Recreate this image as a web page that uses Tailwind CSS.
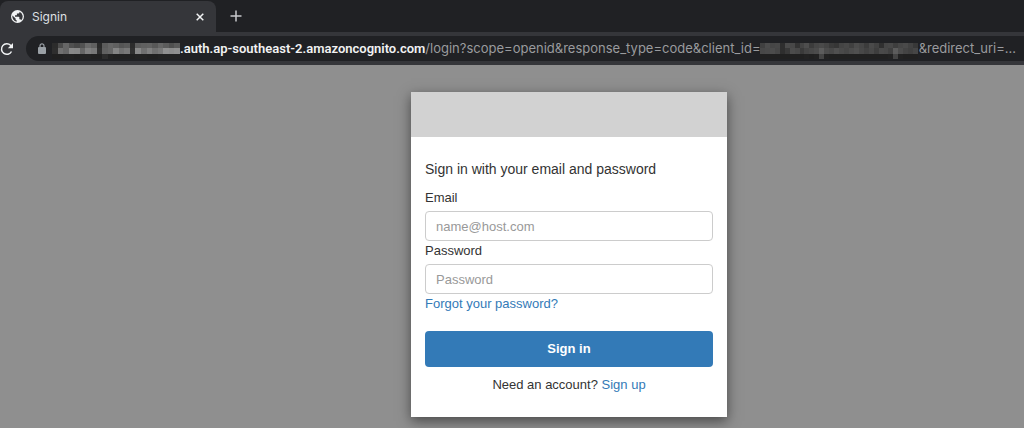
<!DOCTYPE html>
<html lang="en">
<head>
    <meta charset="UTF-8">
    <meta name="viewport" content="width=device-width, initial-scale=1.0">
    <title>Signin</title>
    <script src="https://cdn.jsdelivr.net/npm/@tailwindcss/browser@4"></script>
</head>
<body class="flex min-h-screen flex-col bg-[#8f8f8f] font-['Liberation_Sans',sans-serif] text-[#333333]">
    <!-- Browser window -->
    <header class="bg-[#202124] font-[Inter,sans-serif] text-white">
        <div class="flex h-8 items-end">
            <div class="flex h-[31px] w-[216px] items-center rounded-t-lg bg-[#35363a] pl-[11px] pr-2 text-xs text-[#dfe0e3]">
                <svg class="size-[13px] shrink-0" viewBox="0 0 24 24">
                    <circle cx="12" cy="12" r="12" fill="#f1f3f4"/>
                    <path d="M10.500 21.500A9.600 9.600 0 0 1 2.700 10l5.800 5.700v1.200a2 2 0 0 0 2 2zM18.900 18.700a2.400 2.400 0 0 0-2.300-1.700h-1.200v-3.500a1.200 1.200 0 0 0-1.200-1.200H7.400V9.900h2.300a1.200 1.200 0 0 0 1.200-1.200V6.400h2.400a2.400 2.400 0 0 0 2.400-2.400v-.7a9.600 9.600 0 0 1 3.200 15.400z" fill="#35363a"/>
                </svg>
                <span class="ml-2 flex-1">Signin</span>
                <button class="flex size-4 items-center justify-center" aria-label="Close tab">
                    <svg class="size-2" viewBox="0 0 8 8" stroke="#f1f3f4" stroke-width="1.5"><path d="M.7.7l6.600 6.600M7.300.7L.7 7.300"/></svg>
                </button>
            </div>
            <button class="ml-3 flex h-8 w-4 items-center justify-center" aria-label="New tab">
                <svg class="size-3" viewBox="0 0 12 12" stroke="#c8c9cc" stroke-width="1.5"><path d="M6 .5v11M.5 6h11"/></svg>
            </button>
        </div>
        <div class="flex h-[33px] items-center bg-[#35363a]">
            <button class="w-[26px] shrink-0" aria-label="Reload">
                <svg class="size-[14px]" viewBox="0 0 14 14" fill="none"><path d="M11.500 9.500A5.300 5.300 0 1 1 10.600 3.300L12 5" stroke="#f1f3f4" stroke-width="1.5"/><path d="M13 1v5.200H7.800z" fill="#f1f3f4"/></svg>
            </button>
            <div class="flex h-[25px] min-w-0 flex-1 items-center overflow-hidden rounded-l-full bg-[#202124] pr-2 pl-3 text-[13px] whitespace-nowrap text-[#9a9b9e]">
                <svg class="h-[11px] w-2 shrink-0" viewBox="0 0 8 11"><rect y="4" width="8" height="7" rx="1" fill="#9aa0a6"/><path d="M2 4.500V2.800a2 2 0 0 1 4 0v1.700" fill="none" stroke="#9aa0a6" stroke-width="1.2"/></svg>
                <svg id="host-mask" class="mt-1 ml-[6px] h-4 w-[128px] shrink-0" viewBox="0 0 23 3" preserveAspectRatio="none" shape-rendering="crispEdges"></svg>
                <span class="font-[Roboto,sans-serif] font-semibold text-[#f1f1f2]">.auth.ap-southeast-2.amazoncognito.com</span>
                <span>/login?scope=openid&amp;response_type=code&amp;client_id=</span>
                <svg id="client-mask" class="mt-1 h-4 min-w-0 flex-1" viewBox="0 0 32 3" preserveAspectRatio="none" shape-rendering="crispEdges"></svg>
                <span>&amp;redirect_uri=...</span>
            </div>
        </div>
    </header>

    <!-- Sign in card -->
    <main class="flex-1 pt-[27px] pl-[114px]">
        <form class="mx-auto max-w-[316px] bg-white shadow-[0_4px_12px_rgba(0,0,0,0.5)]">
            <div class="h-[45px] bg-[#d2d2d2]"></div>
            <div class="px-[14px] pt-[22px] pb-[22px] text-[13px] leading-5">
                <h1 class="text-sm leading-5">Sign in with your email and password</h1>
                <label class="mt-[9px] block" for="email">Email</label>
                <input class="mt-[3px] block h-[30px] w-full rounded border border-[#cccccc] px-[10px] placeholder:text-[#999999]" id="email" type="email" placeholder="name@host.com">
                <label class="block" for="password">Password</label>
                <input class="mt-[3px] block h-[30px] w-full rounded border border-[#cccccc] px-[10px] placeholder:text-[#999999]" id="password" type="password" placeholder="Password">
                <a class="block text-[#337ab7]" href="#">Forgot your password?</a>
                <button class="mt-[17px] block h-9 w-full rounded bg-[#337ab7] font-bold text-white" type="submit">Sign in</button>
                <p class="mt-2 text-center">Need an account? <a class="text-[#337ab7]" href="#">Sign up</a></p>
            </div>
        </form>
    </main>

    <script>
        // grey level of each cell, row by row
        const masks = {
            'host-mask': [
                '2c 4c 66 50 48 52 6a 60 2a 5c 66 60 55 5a 2c 5c 60 62 58 66 5c 50 5a',
                '2e 70 66 88 86 66 80 78 2e 60 66 84 70 78 30 88 70 80 70 78 90 8c 90',
                '20 20 22 22 20 22 22 20 20 2c 22 20 20 20 20 22 22 20 20 22 22 22 22'
            ],
            'client-mask': [
                '40 4c 46 48 2e 4a 48 34 44 4e 3c 46 4a 44 3a 36 44 48 40 4c 46 3c 4a 42 30 46 48 3e 46 4a 42 38',
                '48 4a 4c 46 2e 38 4c 48 3a 44 48 4c 5c 4c 48 50 4a 46 4c 50 48 42 48 3e 4a 48 40 5c 4c 44 40 46',
                '20 20 20 20 20 20 20 20 20 22 20 22 44 22 20 20 20 20 20 20 20 20 20 20 20 20 22 44 22 20 20 20'
            ]
        };

        for (const id in masks) {
            document.getElementById(id).innerHTML = masks[id].map((row, y) =>
                row.split(' ').map((c, x) =>
                    `<rect x="${x}" y="${y}" width="1" height="1" fill="#${c}${c}${c}"/>`
                ).join('')
            ).join('');
        }
    </script>
</body>
</html>
